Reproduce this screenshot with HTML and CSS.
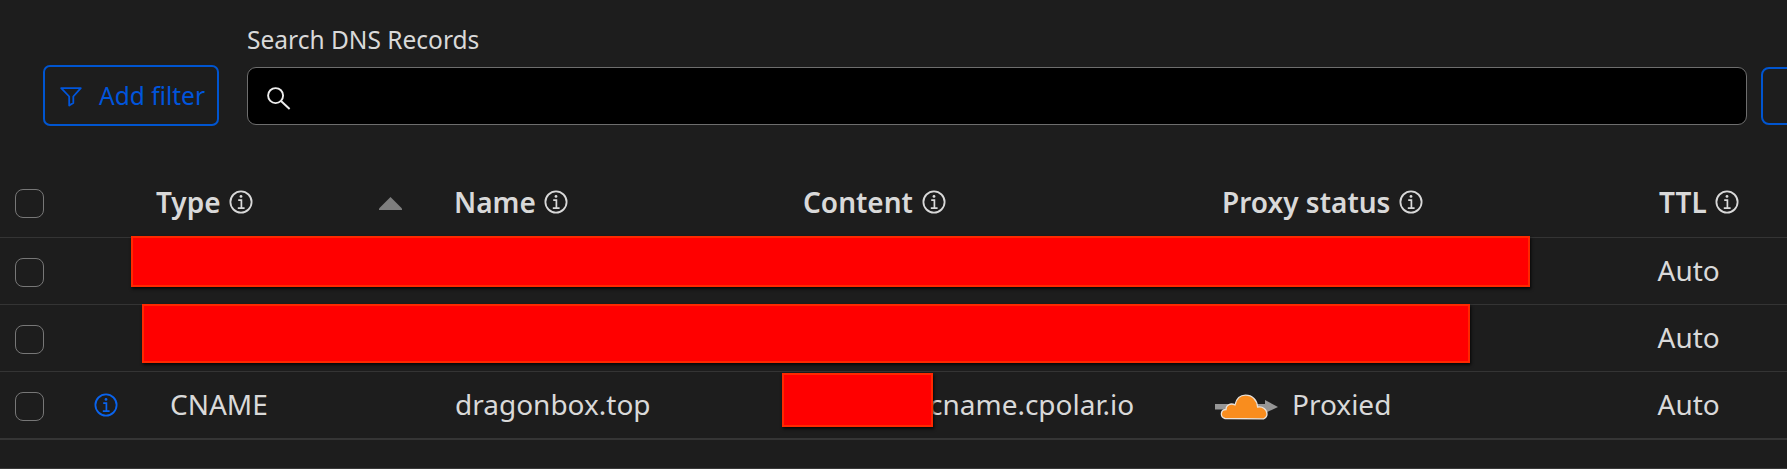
FILE: index.html
```html
<!DOCTYPE html>
<html lang="en">
<head>
<meta charset="utf-8">
<title>DNS Records</title>
<link rel="stylesheet" href="styles.css">
</head>
<body>
<svg width="0" height="0" class="defs" aria-hidden="true">
  <symbol id="info" viewBox="0 0 24 24">
    <circle cx="12" cy="12" r="10.6" fill="none" stroke="currentColor" stroke-width="1.8"/>
    <path d="M9.2 10.2H12.4V18M8.8 18.1H15.6" fill="none" stroke="currentColor" stroke-width="1.7"/>
    <circle cx="12" cy="6.4" r="1.4" fill="currentColor"/>
  </symbol>
</svg>
<main class="page">
  <section class="toolbar">
    <button class="btn filter">
      <svg class="funnel" viewBox="0 0 22 20"><path d="M1.2 1.2H20.8L13.3 9.5V16L9.2 18.6V9.5Z" fill="none" stroke="currentColor" stroke-width="1.8" stroke-linejoin="round"/></svg>
      <span>Add filter</span>
    </button>
    <div class="field">
      <label class="label">Search DNS Records</label>
      <div class="search">
        <svg class="lens" viewBox="0 0 24 23"><circle cx="8.6" cy="8.6" r="7.5" fill="none" stroke="currentColor" stroke-width="1.9"/><path d="M14 14L22.6 22" fill="none" stroke="currentColor" stroke-width="2"/></svg>
      </div>
    </div>
    <button class="btn more" aria-label="More"></button>
  </section>
  <section class="table">
    <div class="row head">
      <span class="check"></span><span></span>
      <div class="cell type">Type <svg class="info"><use href="#info"/></svg><svg class="sort" viewBox="0 0 23 13"><path d="M11.5 0L23 11.5V13H0V11.5Z" fill="#7e7e7e"/></svg></div>
      <div class="cell">Name <svg class="info"><use href="#info"/></svg></div>
      <div class="cell">Content <svg class="info"><use href="#info"/></svg></div>
      <div class="cell">Proxy status <svg class="info"><use href="#info"/></svg></div>
      <div class="cell">TTL <svg class="info"><use href="#info"/></svg></div>
    </div>
    <div class="row">
      <span class="check"></span>
      <span class="cell ttl">Auto</span>
      <div class="mask mask-a"></div>
    </div>
    <div class="row">
      <span class="check"></span>
      <span class="cell ttl">Auto</span>
      <div class="mask mask-b"></div>
    </div>
    <div class="row">
      <span class="check"></span>
      <svg class="info note"><use href="#info"/></svg>
      <span class="cell record-type">CNAME</span>
      <span class="cell record-name">dragonbox.top</span>
      <span class="cell target">cname.cpolar.io</span>
      <span class="cell proxied">
        <svg class="cloud" viewBox="0 0 64 26">
          <path d="M0 10H50V6L63 13L50 19V15.5H0Z" fill="#969696"/>
          <path d="M10 24.5C4.5 23 5.5 15.5 11 15.5C10.8 11 15.5 8.8 20 10.8C21.5 4.5 25.5 1.2 30.5 1.2C37.5 1.2 42 6 42.6 13C47.5 12 52 15.5 52 20C52 22.5 50.5 24 48.5 24.8Z" fill="#f98d1e" stroke="#e9e1d8" stroke-width="1.3"/>
        </svg>
        Proxied
      </span>
      <span class="cell ttl">Auto</span>
      <div class="mask mask-c"></div>
    </div>
  </section>
</main>
</body>
</html>
```

FILE: styles.css
```css
* { box-sizing: border-box; }
body {
  margin: 0;
  background: #1d1d1d;
  color: #d9d9d9;
  font-family: "Noto Sans", sans-serif;
  overflow: hidden;
}
.defs { position: absolute; }
.page {
  width: 1787px;
  height: 469px;
  overflow: hidden;
  border-bottom: 1px solid #383838;
}
.toolbar {
  display: flex;
  align-items: flex-start;
  height: 170px;
  padding-left: 43px;
}
.btn {
  flex: none;
  border: 2px solid #0055d0;
  border-radius: 7px;
  background: transparent;
  color: #0055dc;
  font: 24.5px/32px "Noto Sans", sans-serif;
}
.filter {
  display: flex;
  align-items: center;
  width: 176px;
  height: 61px;
  margin: 65px 28px 0 0;
  padding: 0 0 0 15px;
  white-space: nowrap;
}
.funnel { width: 22px; height: 20px; margin: 2px 17px 0 0; }
.field { flex: none; width: 1500px; padding-top: 23px; }
.label { display: block; height: 44px; font-size: 24.5px; line-height: 33px; }
.search {
  display: flex;
  align-items: center;
  height: 58px;
  padding-left: 18px;
  border: 1px solid #6e6e6e;
  border-radius: 9px;
  background: #000;
  color: #eee;
}
.lens { width: 24px; height: 23px; margin: 5px 0 0 1px; }
.more { width: 60px; height: 58px; margin: 67px 0 0 14px; border-radius: 8px; }
.row {
  position: relative;
  display: grid;
  grid-template-columns: 94px 62px 298px 349px 419px 437px 1fr;
  align-items: center;
  height: 67px;
  border-bottom: 1px solid #343434;
  font-size: 28px;
  line-height: 38px;
}
.row:last-child { height: 68px; border-bottom: 2px solid #353535; }
.head { height: 68px; font-weight: 600; padding-bottom: 2px; }
.cell { display: flex; align-items: center; margin-bottom: 2px; white-space: nowrap; }
.check {
  width: 29px;
  height: 29px;
  margin: 3px 0 0 15px;
  border: 1px solid #777;
  border-radius: 8px;
}
.head .check { margin-top: 1px; }
.info { width: 24px; height: 24px; margin-left: 8.5px; }
.type .info { margin-left: 8px; }
.note { margin-left: 0; color: #0a63ec; }
.sort { width: 23px; height: 13px; margin: 3px 0 0 126px; }
.ttl { grid-column: 7; margin-left: -1.5px; }
.record-type { margin-left: 14px; }
.record-name { margin-left: 1px; }
.target { margin-left: 126px; }
.proxied { margin-left: -7px; }
.cloud { width: 64px; height: 26px; margin: 5px 13px 0 0; }
.mask {
  position: absolute;
  border: 2px solid #ff2800;
  background: #f00;
  box-shadow: 1px 2px 3px rgba(0, 0, 0, .8);
}
.mask-a { left: 131px; top: -2px; width: 1399px; height: 51px; }
.mask-b { left: 142px; top: -1px; width: 1328px; height: 59px; }
.mask-c { left: 782px; top: 1px; width: 151px; height: 54px; }
```
